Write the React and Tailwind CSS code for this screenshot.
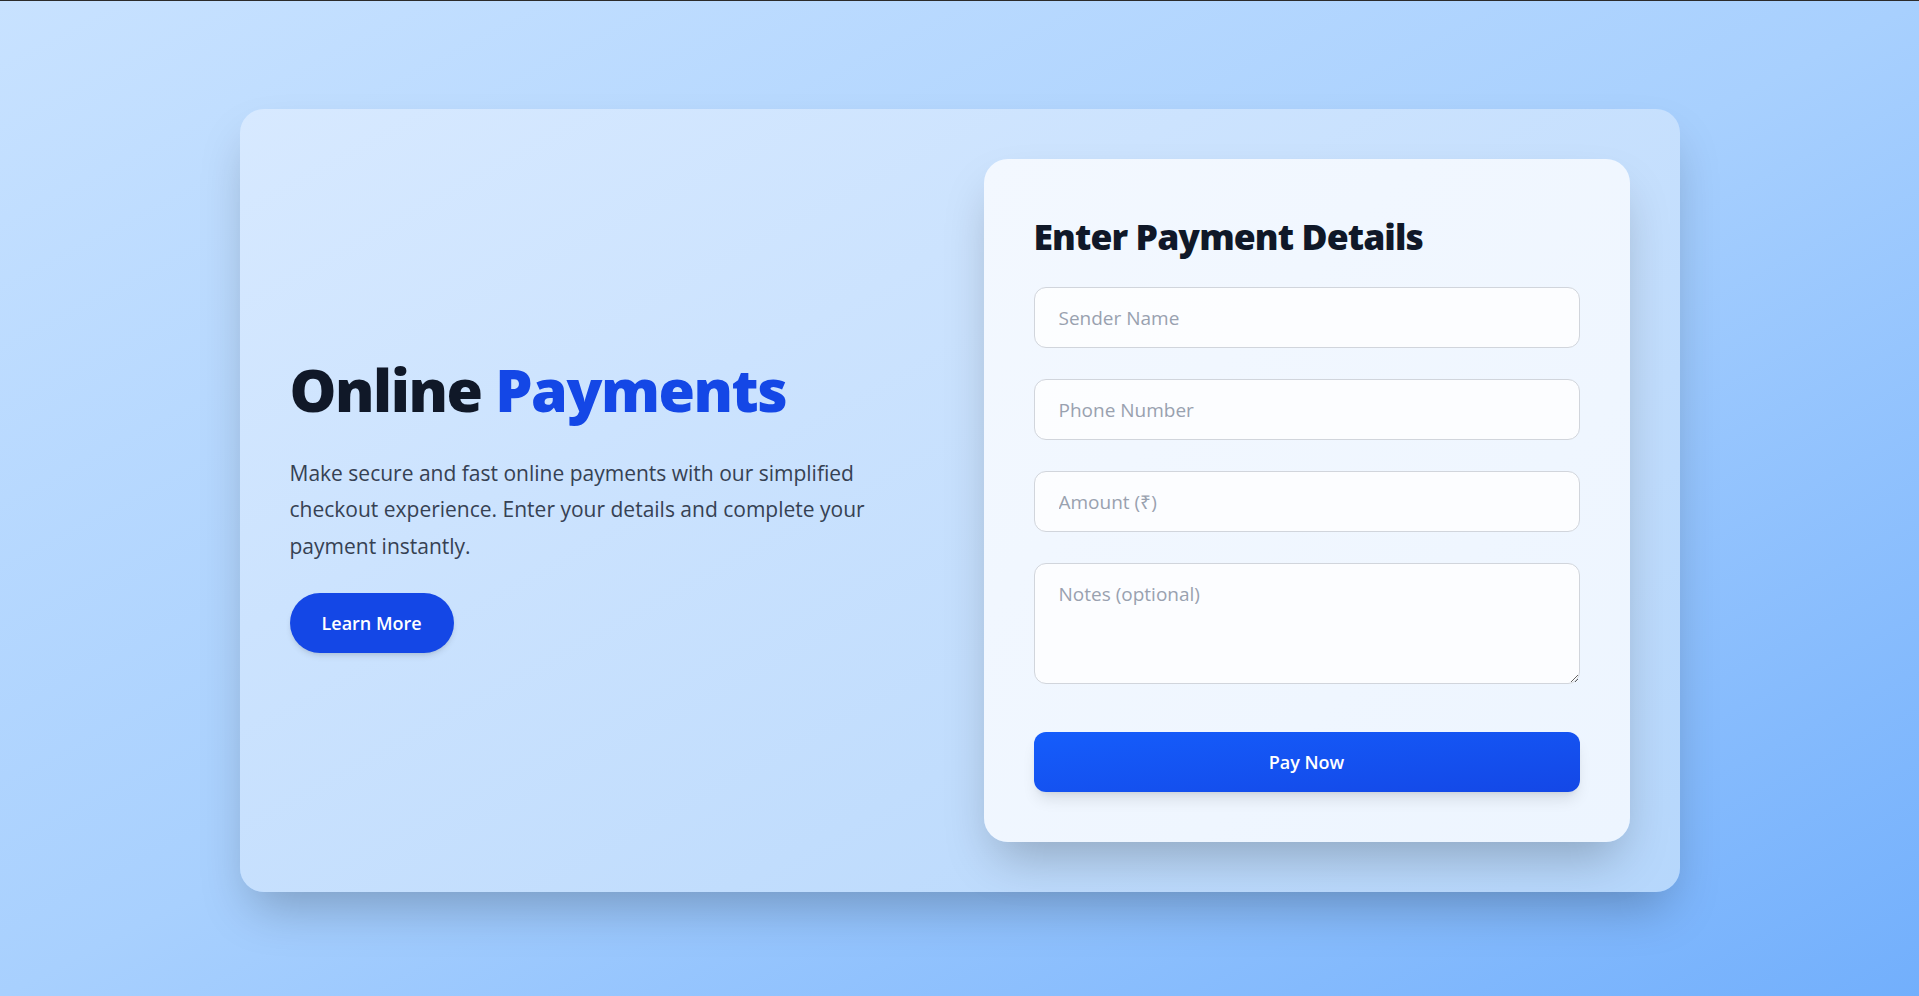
export default function App() {
  return (
    <div className="min-h-screen border-t border-[#2b2b2b] pt-[4px] bg-gradient-to-br from-[#c8e2ff] via-[#a8d0fe] to-[#72affc] flex items-center justify-center font-['Open_Sans',sans-serif]">
      <div className="w-[1440px] rounded-3xl bg-gradient-to-br from-[#d7e9ff] to-[#b6d7fc] shadow-2xl p-[50px] grid grid-cols-2 gap-12 items-center">
        {/* Left */}
        <div className="flex flex-col items-start pt-3">
          <h1 className="text-[59px] leading-none font-black text-gray-900 tracking-tight">
            Online <span className="text-blue-700">Payments</span>
          </h1>
          <p className="mt-9 text-[21px] leading-[36.5px] text-gray-700 max-w-[600px]">
            Make secure and fast online payments with our simplified checkout experience. Enter your details and complete your payment instantly.
          </p>
          <button className="mt-[29px] px-8 h-[60px] rounded-full bg-blue-700 text-white text-lg font-semibold shadow-md">
            Learn More
          </button>
        </div>

        {/* Form */}
        <div className="rounded-3xl bg-gradient-to-br from-[#f3f8ff] to-[#edf5ff] shadow-2xl p-[50px]">
          <h2 className="pt-[7px] mb-[31px] text-[35.5px] leading-10 font-black text-gray-900 tracking-tight">Enter Payment Details</h2>
          <form className="flex flex-col gap-[31px]" onSubmit={e => e.preventDefault()}>
            <input
              placeholder="Sender Name"
              className="h-[61px] px-6 rounded-xl border border-gray-300 bg-white/80 text-[19px] text-gray-800 placeholder:text-gray-400 outline-none"
            />
            <input
              placeholder="Phone Number"
              className="h-[61px] px-6 rounded-xl border border-gray-300 bg-white/80 text-[19px] text-gray-800 placeholder:text-gray-400 outline-none"
            />
            <input
              placeholder="Amount (₹)"
              className="h-[61px] px-6 rounded-xl border border-gray-300 bg-white/80 text-[19px] text-gray-800 placeholder:text-gray-400 outline-none"
            />
            <textarea
              placeholder="Notes (optional)"
              className="h-[121px] px-6 py-4 rounded-xl border border-gray-300 bg-white/80 text-[19px] text-gray-800 placeholder:text-gray-400 outline-none"
            />
            <button className="mt-[17px] h-[60px] rounded-xl bg-gradient-to-br from-blue-600 to-blue-700 text-white text-lg font-semibold shadow-lg">
              Pay Now
            </button>
          </form>
        </div>
      </div>
    </div>
  )
}
